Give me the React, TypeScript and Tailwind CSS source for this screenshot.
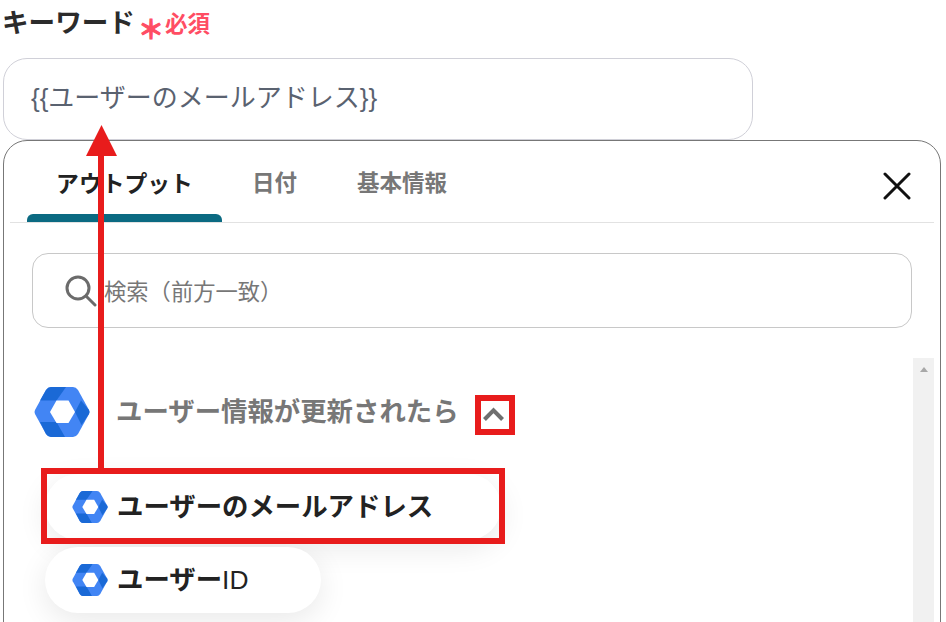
import type { ReactNode } from "react";

const FONT = "font-['Liberation_Sans','Noto_Sans_CJK_JP',sans-serif]";

function Logo({ className }: { className: string }) {
  return (
    <svg viewBox="0 0 56 50" className={className}>
      <path d="M1 23 L12 3 Q14 0 17 0 L39 0 Q42 0 44 3 L55 23 Q56 25 55 27 L44 47 Q42 50 39 50 L17 50 Q14 50 12 47 L1 27 Q0 25 1 23 Z" fill="#4285f4" />
      <path d="M12 3 Q14 0 17 0 L32 0 L22.5 13.5 L6 13.5 Z" fill="#1a69d6" />
      <path d="M47 13.5 L55 23 Q56 25 55 27 L47.5 38 L41 25 Z" fill="#1a69d6" />
      <path d="M6 35 L22.5 35 L31 50 L17 50 Q14 50 12 47 Z" fill="#1a69d6" />
      <path d="M16 25 L22.5 13.5 L34.5 13.5 L41 25 L34.5 36 L22.5 36 Z" fill="#fff" />
    </svg>
  );
}

function Pill({ children, width }: { children: ReactNode; width: string }) {
  return (
    <div className={`flex h-[66px] items-center gap-[9px] rounded-[33px] bg-white pl-[27px] shadow-[0_8px_30px_rgba(0,0,0,0.09)] ${width}`}>
      <Logo className="h-[32px] w-[36px] shrink-0" />
      <span className="text-[26.4px] leading-none font-bold text-[#222]">{children}</span>
    </div>
  );
}

export default function App() {
  return (
    <div className={`relative h-[622px] w-[946px] overflow-hidden bg-white pl-[3px] ${FONT}`}>
      <div className="flex h-[58px] items-start pt-[5px]">
        <span className="-ml-[1px] text-[26.6px] leading-[36px] font-bold text-[#2b2b2b]">キーワード</span>
        <span className="mt-[7px] ml-[3px] text-[26px] leading-[36px] font-bold text-[#ff4d63] [-webkit-text-stroke:1px_#ff4d63]">＊</span>
        <span className="mt-[2px] ml-[1px] text-[22.5px] leading-[36px] font-bold text-[#ff4d63]">必須</span>
      </div>

      <div className="flex h-[82px] w-[750px] items-center rounded-[24px] border border-[#d0d0d8] pb-[2px] pl-[27px] text-[26px] text-[#5a6270]">
        {"{{ユーザーのメールアドレス}}"}
      </div>

      <div className="h-[520px] w-[938px] rounded-[24px] border border-[#777] bg-white px-[6px]">
        <div className="flex h-[82px] items-end border-b border-[#e2e2e2]">
          <div className="ml-[17px] flex h-full w-[195px] flex-col items-center">
            <span className="flex-1 pt-[24px] text-[22.8px] leading-[38px] font-bold text-[#222]">アウトプット</span>
            <div className="h-[8px] w-full rounded-t-[6px] bg-[#0b6a82]" />
          </div>
          <div className="ml-[30px] h-full pt-[24px] text-[22.5px] leading-[38px] font-bold text-[#777]">日付</div>
          <div className="ml-[60px] h-full pt-[24px] text-[22.5px] leading-[38px] font-bold text-[#777]">基本情報</div>
          <svg viewBox="0 0 28 28" className="mt-[31px] mr-[23px] ml-auto h-[28px] w-[28px] self-start" fill="none" stroke="#111" strokeWidth="3" strokeLinecap="round">
            <path d="M2 2 L26 26 M26 2 L2 26" />
          </svg>
        </div>

        <div className="mt-[30px] ml-[22px] flex h-[75px] w-[880px] items-center rounded-[16px] border border-[#c8c8c8] pl-[32px] text-[22.3px] text-[#777]">
          <svg viewBox="0 0 32 32" className="mr-[7px] h-[32px] w-[32px]" fill="none" stroke="#6b6b6b" strokeWidth="3" strokeLinecap="round">
            <circle cx="13" cy="13" r="11" />
            <path d="M21 21 L30 30" />
          </svg>
          <span className="pt-[4px]">検索（前方一致）</span>
        </div>

        <div className="flex">
          <div className="flex-1">
            <div className="mt-[59px] ml-[24px] flex items-center">
              <Logo className="h-[50px] w-[56px]" />
              <span className="ml-[26px] pt-[1px] text-[26.4px] leading-none font-bold text-[#777]">ユーザー情報が更新されたら</span>
              <svg viewBox="0 0 28 18" className="mt-[4px] ml-[23px] h-[15px] w-[23px]" fill="none" stroke="#6f6f6f" strokeWidth="5">
                <path d="M3 15 L14 4 L25 15" />
              </svg>
            </div>
            <div className="mt-[37px] ml-[35px] flex flex-col gap-[7px]">
              <Pill width="w-[456px]">ユーザーのメールアドレス</Pill>
              <Pill width="w-[276px]">
                ユーザー<span className="font-normal">ID</span>
              </Pill>
            </div>
          </div>
          <div className="mt-[30px] flex h-[300px] w-[21px] justify-center bg-[#f1f1f1] pt-[9px]">
            <div className="h-0 w-0 border-x-[4.5px] border-b-[5px] border-x-transparent border-b-[#a8a8a8]" />
          </div>
        </div>
      </div>

      {/* annotation overlays */}
      <div className="absolute top-[395px] left-[475px] h-[40px] w-[40px] border-[6px] border-[#e81c1c]" />
      <div className="absolute top-[468px] left-[41px] h-[76px] w-[464px] border-[6px] border-[#e81c1c]" />
      <div className="absolute top-[155px] left-[98px] h-[314px] w-[6px] bg-[#e81c1c]" />
      <svg viewBox="0 0 31 31" className="absolute top-[125px] left-[86px] h-[31px] w-[31px]">
        <path d="M15.5 0 L31 31 L0 31 Z" fill="#e81c1c" />
      </svg>
    </div>
  );
}
